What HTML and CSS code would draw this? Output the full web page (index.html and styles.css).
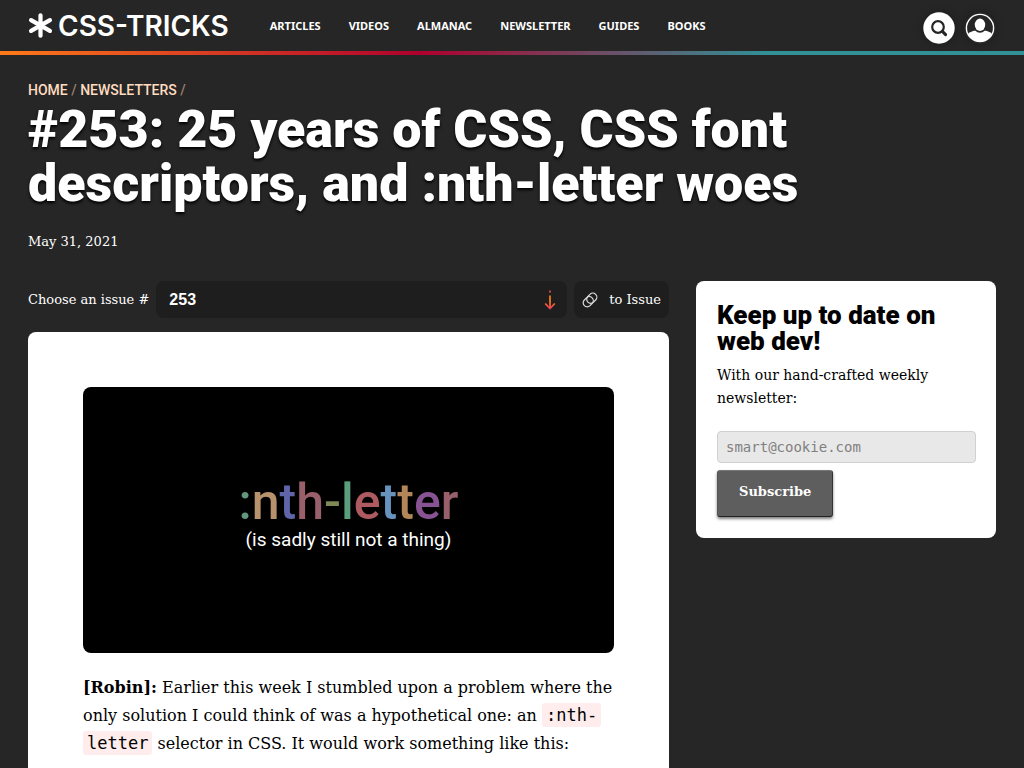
FILE: index.html
```html
<!DOCTYPE html>
<html lang="en">
<head>
<meta charset="utf-8">
<meta name="viewport" content="width=device-width, initial-scale=1">
<title>#253: 25 years of CSS | CSS-Tricks</title>
<link rel="stylesheet" href="styles.css">
</head>
<body>
<header class="site-header">
  <a class="logo" href="#" aria-label="CSS-Tricks">
    <svg class="logo-star" viewBox="0 0 26 26" aria-hidden="true"><path d="M13 2.4v21.2M3.2 7.4l19.6 11.2M22.8 7.4L3.2 18.6"/></svg>
    <span>CSS-TRICKS</span>
  </a>
  <nav class="site-nav">
    <a href="#">Articles</a>
    <a href="#">Videos</a>
    <a href="#">Almanac</a>
    <a href="#">Newsletter</a>
    <a href="#">Guides</a>
    <a href="#">Books</a>
  </nav>
  <div class="header-tools">
    <button class="icon-button" type="button" aria-label="Search">
      <svg viewBox="0 0 32 32"><circle cx="16" cy="16" r="15.7" fill="#fff"/><circle cx="15" cy="15" r="5.8" fill="none" stroke="#262626" stroke-width="2.2"/><path d="M19.600 19.600l3 3" stroke="#262626" stroke-width="3" stroke-linecap="round"/></svg>
    </button>
    <a class="icon-button" href="#" aria-label="Account">
      <svg viewBox="0 0 32 32"><clipPath id="disc"><circle cx="16" cy="16" r="13.6"/></clipPath><circle cx="16" cy="16" r="13.6" fill="none" stroke="#fff" stroke-width="1.4"/><g clip-path="url(#disc)" fill="#fff"><path d="M2 31v-7c2.500-3 5.500-4.900 9-5.400h10c3.500.5 6.500 2.400 9 5.400V31z"/><ellipse cx="16" cy="12.800" rx="6.800" ry="8" fill="#262626"/><ellipse cx="16" cy="12.800" rx="5.200" ry="6.200"/></g></svg>
    </a>
  </div>
</header>

<div class="page">
  <nav class="breadcrumbs" aria-label="Breadcrumb">
    <a href="#">Home</a> / <a href="#">Newsletters</a> /
  </nav>
  <h1 class="title">#253: 25 years of CSS, CSS font descriptors, and :nth-letter woes</h1>
  <time class="date" datetime="2021-05-31">May 31, 2021</time>

  <div class="columns">
    <main class="main">
      <form class="issue-picker">
        <label for="issue">Choose an issue #</label>
        <div class="select-wrap">
          <select id="issue" class="issue-select"><option>253</option></select>
          <svg class="select-arrow" viewBox="0 0 12 20" aria-hidden="true">
            <defs><linearGradient id="flame" gradientUnits="userSpaceOnUse" x1="0" y1="0" x2="0" y2="20"><stop offset="0" stop-color="#e52e71"/><stop offset=".25" stop-color="#ff7a18"/><stop offset=".6" stop-color="#ff7a18"/><stop offset="1" stop-color="#e52e71"/></linearGradient></defs>
            <path d="M6 .5v2M6 5.500v13M1.200 13.500L6 18.500l4.800-5" fill="none" stroke="url(#flame)" stroke-width="1.700"/>
          </svg>
        </div>
        <button class="issue-link" type="button">
          <svg class="link-icon" viewBox="0 0 16 16" aria-hidden="true"><g fill="none" stroke="#ddd" stroke-width="1.200" transform="rotate(-45 8 8)"><rect x="0" y="4" width="11" height="8" rx="4"/><rect x="5" y="4" width="11" height="8" rx="4"/></g></svg>
          <span>to Issue</span>
        </button>
      </form>

      <article class="article">
        <div class="banner">
          <p class="banner-word"><span class="sage">:</span><span class="tan">n</span><span class="indigo">t</span><span class="rose">h</span><span class="olive">-</span><span class="green">l</span><span class="red">e</span><span class="blue">t</span><span class="amber">t</span><span class="purple">e</span><span class="rose">r</span></p>
          <p class="banner-note">(is sadly still not a thing)</p>
        </div>
        <p class="copy"><strong>[Robin]:</strong> Earlier this week I stumbled upon a problem where the only solution I could think of was a hypothetical one: an <code>:nth-letter</code> selector in CSS. It would work something like this:</p>
      </article>
    </main>

    <aside class="signup">
      <h2 class="signup-title">Keep up to date on web dev!</h2>
      <form class="signup-form">
        <label for="email">With our hand-crafted weekly newsletter:</label>
        <input id="email" class="email" type="email" placeholder="smart@cookie.com">
        <button class="subscribe" type="button">Subscribe</button>
      </form>
    </aside>
  </div>
</div>
</body>
</html>
```
FILE: styles.css
```css
* { box-sizing: border-box; }

body {
  margin: 0;
  background: #262626;
  color: #fff;
  font: 14px/24px "DejaVu Serif", serif;
}

a { color: inherit; text-decoration: none; }
p, h1, h2 { margin: 0; }
button, select, input { margin: 0; font: inherit; color: inherit; }

.site-header {
  display: flex;
  align-items: center;
  height: 55px;
  padding: 0 28px;
  border-bottom: 4px solid;
  border-image: linear-gradient(to right, #ff7a18, #af002d 41%, #319197 75%) 1;
}

.logo {
  display: flex;
  align-items: center;
  gap: 5px;
  font: 600 28px/32px Inter, sans-serif;
}

.logo-star {
  width: 25px;
  height: 25px;
  fill: none;
  stroke: #fff;
  stroke-width: 4.4;
  stroke-linecap: round;
}

.site-nav {
  display: flex;
  gap: 28px;
  margin-left: 41px;
  font: 700 11px/16px "Noto Sans", sans-serif;
  text-transform: uppercase;
}

.header-tools {
  display: flex;
  gap: 9px;
  margin-left: auto;
  padding-top: 4px;
}

.icon-button {
  display: block;
  width: 32px;
  height: 32px;
  padding: 0;
  border: 0;
  background: none;
  border-radius: 50%;
  box-shadow: 0 0 8px rgba(0, 0, 0, 0.3);
}

.icon-button svg { display: block; width: 32px; height: 32px; }

.page { padding: 25px 28px 56px; }

.breadcrumbs {
  color: #9c8270;
  font: 500 14px/20px Roboto, sans-serif;
  text-transform: uppercase;
}

.breadcrumbs a { color: #ffdcc0; }

.title {
  margin-top: 3px;
  font: 900 52px/54px Roboto, sans-serif;
  text-shadow: 0 2px 3px #000;
}

.date { display: block; margin-top: 19px; font-size: 13px; }

.columns {
  display: grid;
  grid-template-columns: minmax(0, 1fr) 300px;
  gap: 27px;
  align-items: start;
  margin-top: 27px;
}

.issue-picker {
  display: flex;
  align-items: center;
  gap: 7px;
  font-size: 13px;
}

.select-wrap { position: relative; flex: 1; }

.issue-select {
  display: block;
  width: 100%;
  height: 37px;
  padding: 0 32px 0 13px;
  border: 0;
  border-radius: 8px;
  background: #1e1e1e;
  font: 700 16px/20px "Liberation Sans", sans-serif;
  appearance: none;
}

.select-arrow {
  position: absolute;
  top: 9px;
  right: 11px;
  width: 12px;
  height: 20px;
  pointer-events: none;
}

.issue-link {
  display: flex;
  align-items: center;
  gap: 11px;
  height: 37px;
  padding: 0 8px;
  border: 0;
  border-radius: 8px;
  background: #1e1e1e;
}

.link-icon { width: 16px; height: 16px; }

.article {
  margin-top: 14px;
  padding: 55px 55px 56px;
  border-radius: 8px;
  background: #fff;
  color: #000;
}

.banner {
  display: flex;
  flex-direction: column;
  align-items: center;
  justify-content: center;
  aspect-ratio: 2 / 1;
  padding-bottom: 12px;
  border-radius: 8px;
  background: #000;
}

.banner-word { font: 500 50px/52px Roboto, sans-serif; }
.banner-note { color: #fff; font: 19px/24px Roboto, sans-serif; }

.sage { color: #64967f; }
.tan { color: #b8926d; }
.indigo { color: #6064a8; }
.rose { color: #98606a; }
.olive { color: #7f8955; }
.green { color: #5a9e7e; }
.red { color: #ad5b61; }
.blue { color: #6692bd; }
.amber { color: #b38659; }
.purple { color: #875393; }

.copy { margin-top: 21px; font-size: 16px; line-height: 28px; }

.copy code {
  padding: 2px 4px;
  border-radius: 3px;
  background: #ffeded;
  font: 17px/20px "DejaVu Sans Mono", monospace;
  -webkit-box-decoration-break: clone;
  box-decoration-break: clone;
}

.signup {
  padding: 21px 20px 21px 21px;
  border-radius: 8px;
  background: #fff;
  color: #000;
}

.signup-title { font: 900 26px/26px Roboto, sans-serif; }

.signup-form {
  display: flex;
  flex-direction: column;
  align-items: flex-start;
  margin-top: 10px;
}

.signup-form label { line-height: 23px; }

.email {
  width: 100%;
  height: 32px;
  margin-top: 21px;
  padding: 0 8px;
  border: 1px solid #d0d0d0;
  border-radius: 4px;
  background: #e8e8e8;
  font: 14px/20px "DejaVu Sans Mono", monospace;
}

.email::placeholder { color: #808080; }

.subscribe {
  height: 47px;
  margin-top: 7px;
  padding: 0 21px 3px;
  border: 1px solid;
  border-color: #777 #333 #222 #555;
  border-radius: 3px;
  background: #5e5e5e;
  color: #fff;
  font-size: 13px;
  font-weight: 700;
  box-shadow: 0 2px 3px rgba(0, 0, 0, 0.5);
}
```
